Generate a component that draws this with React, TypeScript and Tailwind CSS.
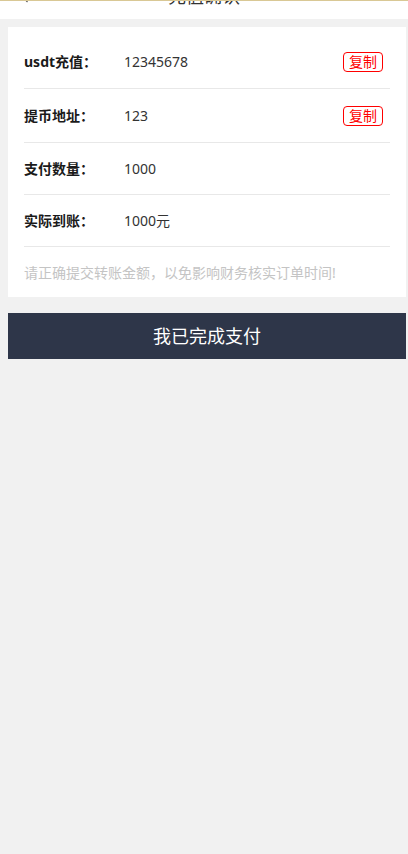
import React from 'react';

const rows = [
  { label: 'usdt充值：', value: '12345678', copy: true, h: 'h-[54px]' },
  { label: '提币地址：', value: '123', copy: true, h: 'h-[54px]' },
  { label: '支付数量：', value: '1000', copy: false, h: 'h-[52px]' },
  { label: '实际到账：', value: '1000元', copy: false, h: 'h-[52px]' },
];

export default function App() {
  return (
    <div
      className="min-h-[854px] bg-[#f1f1f1]"
      style={{ fontFamily: '"Noto Sans", "Noto Sans CJK SC", sans-serif' }}
    >
      {/* 顶部导航（已滚动，只露出下半截） */}
      <div className="h-[19px] overflow-hidden border-t border-[#d9c895] bg-white">
        <div className="relative -mt-[16px] flex h-[22px] items-center justify-center">
          <svg className="absolute left-[21px] top-[6px] h-[12px] w-[8px]" viewBox="0 0 8 12" fill="none">
            <path d="M6.5 1 L1.5 6 L6.5 11" stroke="#555" strokeWidth="1.2" />
          </svg>
          <span className="text-[18px] leading-[22px] text-[#333]">充值确认</span>
        </div>
      </div>

      {/* 信息卡片 */}
      <div className="ml-2 mr-[2px] mt-2 bg-white px-4 pt-2">
        {rows.map((r) => (
          <div
            key={r.label}
            className={`flex items-center border-b border-[#e8e8e8] pr-[7px] ${r.h}`}
          >
            <span className="w-[100px] shrink-0 text-[14px] font-bold text-[#1a1a1a]">{r.label}</span>
            <span className="flex-1 text-[14px] text-[#333]">{r.value}</span>
            {r.copy && (
              <button className="flex h-[20px] w-[40px] items-center justify-center rounded-[4px] border border-[#f00] text-[14px] leading-none text-[#f00]">
                复制
              </button>
            )}
          </div>
        ))}
        <div className="flex h-[50px] items-center text-[14px] text-[#c4c4c4]">
          请正确提交转账金额，以免影响财务核实订单时间!
        </div>
      </div>

      {/* 提交按钮 */}
      <button className="ml-2 mr-[2px] mt-4 flex h-[46px] w-[calc(100%-10px)] items-center justify-center bg-[#2e3649] text-[18px] text-white">
        我已完成支付
      </button>
    </div>
  );
}
